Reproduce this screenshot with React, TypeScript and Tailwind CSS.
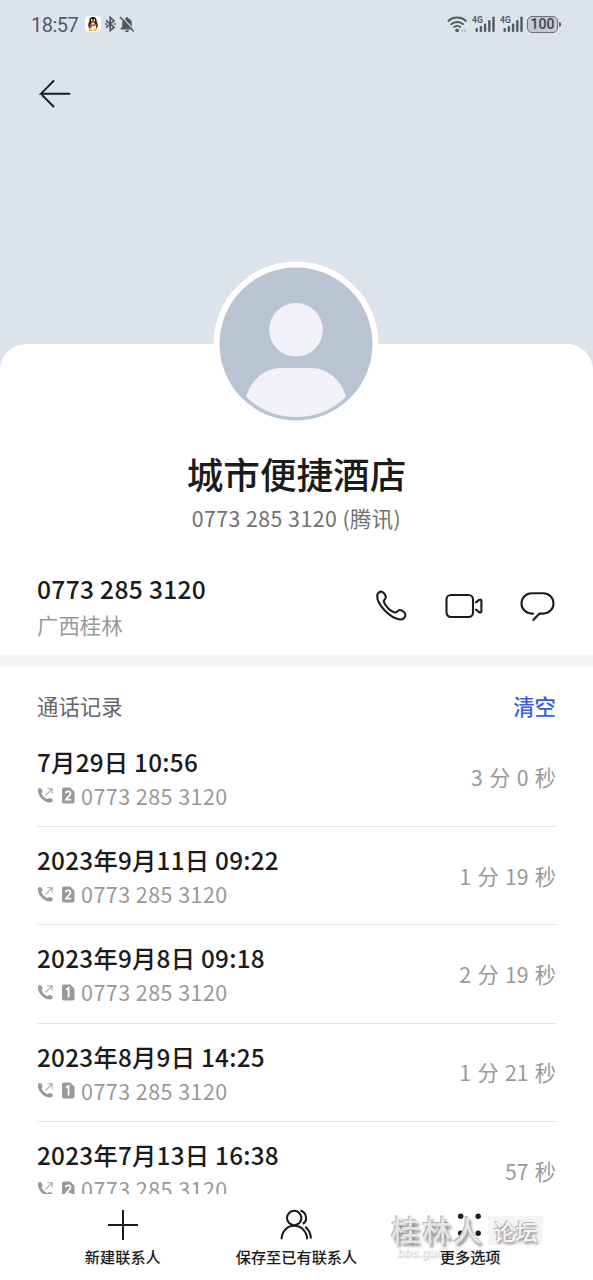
import React from "react";

const calls = [
    { date: "7月29日 10:56", sim: 2, duration: "3 分 0 秒" },
    { date: "2023年9月11日 09:22", sim: 2, duration: "1 分 19 秒" },
    { date: "2023年9月8日 09:18", sim: 1, duration: "2 分 19 秒" },
    { date: "2023年8月9日 14:25", sim: 1, duration: "1 分 21 秒" },
    { date: "2023年7月13日 16:38", sim: 2, duration: "57 秒" },
];

function Signal() {
    return (
        <svg className="w-[24px] h-[18px]" viewBox="0 0 24 18" fill="#555a61">
            <text x="0" y="8" fontSize="8.5" fontWeight="700" fontFamily="Roboto, sans-serif">4G</text>
            <rect x="3.5" y="13" width="2.4" height="4" rx="1" />
            <rect x="7.7" y="11" width="2.4" height="6" rx="1" />
            <rect x="11.9" y="8.5" width="2.4" height="8.5" rx="1" />
            <rect x="16.1" y="5" width="2.4" height="12" rx="1" />
            <rect x="20.3" y="1.5" width="2.4" height="15.5" rx="1" />
        </svg>
    );
}

function StatusBar() {
    return (
        <div className="h-[48px] pl-[31px] pr-[32px] flex items-center justify-between text-[#555a61]">
            <div className="flex items-center">
                <span className="w-[54px] pt-px text-[20px] leading-none tracking-[-0.5px] font-[Roboto,sans-serif]">18:57</span>
                <svg className="w-[16px] h-[16px]" viewBox="0 0 16 16">
                    <rect width="16" height="16" rx="4" fill="#fff" />
                    <ellipse cx="8" cy="9" rx="4.8" ry="5" fill="#222" />
                    <ellipse cx="8" cy="5" rx="3.6" ry="4" fill="#111" />
                    <ellipse cx="8" cy="10.5" rx="3.2" ry="3.6" fill="#fff" />
                    <ellipse cx="6.7" cy="4" rx="0.8" ry="1" fill="#fff" />
                    <ellipse cx="9.3" cy="4" rx="0.8" ry="1" fill="#fff" />
                    <ellipse cx="8" cy="6" rx="2.3" ry="0.7" fill="#f5a623" />
                    <path d="M3.8 7.2Q8 9.6 12.2 7.2V8.7Q8 10.6 6.8 9.6V11.8H5V9.2L3.8 8.5Z" fill="#d8262c" />
                    <path d="M4 14.4h3.6M8.4 14.4H12" stroke="#f5a623" strokeWidth="1.2" />
                </svg>
                <svg className="ml-[4px] w-[11px] h-[16px]" viewBox="0 0 11 16" fill="none" stroke="currentColor" strokeWidth="1.7">
                    <path d="M1 4.5L9 11.2L5.2 14.6V1.4L9 4.8L1 11.5" />
                    <path d="M0 8h2M8.8 8h2" />
                </svg>
                <svg className="ml-[3px] w-[16px] h-[17px]" viewBox="0 0 16 17">
                    <path d="M8 1a1.2 1.2 0 0 1 1.2 1.3C11.6 2.9 12.8 4.7 12.8 7v3.5l1.6 2V13.6H1.6v-1.1l1.6-2V7c0-2.3 1.2-4.1 3.6-4.7A1.2 1.2 0 0 1 8 1ZM6 14.3h4a2 2 0 0 1-4 0Z" fill="currentColor" />
                    <path d="M2.6 .7L16 14.8" stroke="#dbe3ec" strokeWidth="1.2" />
                    <path d="M1 1L14.8 15.6" stroke="currentColor" strokeWidth="1.5" />
                </svg>
            </div>
            <div className="flex items-center">
                <svg className="w-[21px] h-[17px]" viewBox="0 0 21 17" fill="none" stroke="currentColor" strokeWidth="2">
                    <path d="M.9 5.5C6 .3 14.3.3 19.4 5.5" />
                    <path d="M3.7 8.6c3.6-3.6 9.3-3.6 12.9 0" />
                    <path d="M6.6 11.5c2-1.9 5.1-1.9 7.1 0" />
                    <circle cx="10.1" cy="14.3" r="1.9" fill="currentColor" stroke="none" />
                    <path d="M14.5 14.5h1.6M17.2 14.5h1.6" stroke="#a9b0b9" />
                </svg>
                <span className="ml-[4px] flex gap-[4px]"><Signal /><Signal /></span>
                <span className="ml-[3px] w-[31px] h-[17px] rounded-[5px] border-[1.5px] border-[#6b7078] bg-[#c3c9d1] flex items-center justify-center text-[14px] leading-none font-medium text-[#3f444a] font-[Roboto,sans-serif]">100</span>
                <span className="ml-px w-[2px] h-[5px] rounded-r bg-[#555a61]" />
            </div>
        </div>
    );
}

function Avatar() {
    return (
        <svg className="-mt-[83px] mr-px w-[166px] h-[166px] shrink-0" viewBox="0 0 166 166">
            <circle cx="83" cy="83" r="82.5" fill="#fff" />
            <circle cx="83" cy="83" r="76.5" fill="#b9c4d1" />
            <circle cx="83" cy="68.7" r="26.8" fill="#f0f2f7" />
            <path d="M33 135.5C38 119 52 107 67 107H99C114 107 128 119 133 135.5C120 149 103 156 83 156S46 149 33 135.5Z" fill="#f0f2f7" />
        </svg>
    );
}

function OutgoingIcon() {
    return (
        <svg className="w-[17px] h-[17px]" viewBox="0 0 17 17">
            <path d="M1.1 2.2C1.8.9 3.6.5 4.4 1.8L5.4 3.6C6 5 4.5 5.5 4.5 6.3C5.4 8.9 8 11.3 10.3 12C11.1 12.1 11.6 10.6 13 11L15 12.1C16.3 13 15.8 14.7 14.4 15.3C8.4 17.3-.6 8.6 1.1 2.2Z" fill="#999" />
            <path d="M8.3 8.7L15 2M10.3 1.8h4.9v4.9" fill="none" stroke="#aaa" strokeWidth="1.1" />
        </svg>
    );
}

function SimIcon({ slot }: { slot: number }) {
    return (
        <svg className="ml-[8px] w-[13px] h-[17px]" viewBox="0 0 13 17">
            <path d="M2 .5H8.2L12.5 4.8V14.5A2 2 0 0 1 10.5 16.5H2A2 2 0 0 1 0 14.5V2.5A2 2 0 0 1 2 .5Z" fill="#999" />
            {slot === 1 ? (
                <path d="M4 5.8L6.6 4V13.5" fill="none" stroke="#fff" strokeWidth="1.8" />
            ) : (
                <path d="M3.8 6.3C4 3.7 8.7 3.8 8.6 6.5C8.5 8.3 5.2 10.2 4 12.6H9.2" fill="none" stroke="#fff" strokeWidth="1.7" />
            )}
        </svg>
    );
}

export default function App() {
    return (
        <div className="w-[593px] h-[1280px] overflow-hidden flex flex-col bg-[#dbe3ec] font-['Noto_Sans_CJK_SC',sans-serif] text-[#1b1b1b] whitespace-nowrap">
            <header className="h-[344px] shrink-0">
                <StatusBar />
                <svg className="mt-[30px] ml-[38px] w-[34px] h-[32px]" viewBox="0 0 34 32" fill="none" stroke="#191a1c" strokeWidth="1.9" strokeLinecap="round">
                    <path d="M15.5 3L3 15.7H31.5M4.5 17.5L15.5 28.5" />
                </svg>
            </header>

            <main className="flex-1 min-h-0 flex flex-col bg-white rounded-t-[26px]">
                <section className="h-[311px] shrink-0 flex flex-col items-center">
                    <Avatar />
                    <h1 className="mt-[23px] text-[36.6px] leading-[48px] font-medium">城市便捷酒店</h1>
                    <p className="mt-[6px] text-[21.3px] leading-[28px] tracking-[0.45px] text-[#707070]">0773 285 3120 (腾讯)</p>
                    <div className="mt-[39px] w-full pl-[37px] pr-[38px] flex items-center justify-between">
                        <div>
                            <div className="text-[24.6px] leading-[34px] tracking-[0.3px] font-medium">0773 285 3120</div>
                            <div className="mt-[4px] text-[21.4px] leading-[32px] text-[#999]">广西桂林</div>
                        </div>
                        <div className="flex items-center gap-[36px]">
                            <svg className="w-[34px] h-[34px]" viewBox="0 0 34 34" fill="none" stroke="#1c1c1c" strokeWidth="2.1" strokeLinejoin="round">
                                <path d="M2.2 6.3C2.6 3.8 4.9 2.2 6.8 2.8C9 3.5 11 6.3 10.8 8.5C10.6 10.6 8.5 10.7 8.8 12.8C9.8 16.8 16 22.8 19.8 23.5C22 23.8 22.8 21 24.8 21C27.4 21.1 30.6 24 30.4 26.3C30.3 28.7 27.9 30.8 25 30.5C15.5 29.1 1.6 15.8 2.2 6.3Z" />
                            </svg>
                            <svg className="w-[38px] h-[34px]" viewBox="0 0 38 34" fill="none" stroke="#1c1c1c" strokeWidth="2.1" strokeLinecap="round">
                                <rect x="1.5" y="6" width="26.5" height="22" rx="4.5" />
                                <path d="M31 13.3L34 11Q36.4 9.7 36.4 12V22Q36.4 24.3 34 23L31 20.7" />
                            </svg>
                            <svg className="w-[36px] h-[34px]" viewBox="0 0 36 34" fill="none" stroke="#1c1c1c" strokeWidth="2.1" strokeLinecap="round">
                                <path d="M14 24.6H12.7A10.2 10.2 0 0 1 12.7 4.2H24.3A10.2 10.2 0 0 1 24.3 24.6H20.5L14.3 31" />
                            </svg>
                        </div>
                    </div>
                </section>

                <div className="h-[12px] shrink-0 bg-[#f5f5f5]" />

                <section className="flex-1 min-h-0 overflow-hidden px-[37px]">
                    <div className="h-[61.5px] pt-[23px] flex justify-between text-[21.4px] leading-[32px]">
                        <span className="text-[#666]">通话记录</span>
                        <span className="font-medium text-[#3460e0]">清空</span>
                    </div>
                    {calls.map((call) => (
                        <div key={call.date} className="h-[98.4px] border-b border-[#e5e5e5] flex items-center justify-between">
                            <div>
                                <div className="text-[24.3px] leading-[34px] tracking-[0.25px] font-medium">{call.date}</div>
                                <div className="mt-[3px] flex items-center">
                                    <OutgoingIcon />
                                    <SimIcon slot={call.sim} />
                                    <span className="ml-[6px] text-[21.5px] leading-[28px] tracking-[0.45px] text-[#999]">0773 285 3120</span>
                                </div>
                            </div>
                            <span className="text-[21.2px] leading-[30px] [word-spacing:1.6px] text-[#999]">{call.duration}</span>
                        </div>
                    ))}
                </section>

                <nav className="relative h-[86px] shrink-0 px-[36px] grid grid-cols-3 bg-white text-[15.2px] leading-[22px] font-medium">
                    <div className="pt-[14px] flex flex-col items-center">
                        <svg className="w-[34px] h-[34px]" viewBox="0 0 34 34" fill="none" stroke="#1c1c1c" strokeWidth="2">
                            <path d="M17 2V32M2 17H32" />
                        </svg>
                        <span className="mt-[3px]">新建联系人</span>
                    </div>
                    <div className="pt-[14px] flex flex-col items-center">
                        <svg className="w-[34px] h-[34px]" viewBox="0 0 34 34" fill="none" stroke="#1c1c1c" strokeWidth="2.1">
                            <circle cx="15.2" cy="10" r="7.2" />
                            <path d="M2.6 31.3C2.7 23.5 8 17.8 15.2 17.8S28 23.5 28.1 31.3" />
                            <path d="M21.5 2.6C28.5 5 28.5 13.5 23.7 15.8M26.3 18.8C30.2 21.7 31.7 25.8 31.9 30.5" />
                        </svg>
                        <span className="mt-[3px]">保存至已有联系人</span>
                    </div>
                    <div className="pt-[14px] flex flex-col items-center">
                        <svg className="w-[34px] h-[34px]" viewBox="0 0 34 34" fill="#1c1c1c">
                            <circle cx="7.7" cy="8.3" r="2.7" />
                            <circle cx="25.2" cy="8.3" r="2.7" />
                            <circle cx="7.7" cy="25.3" r="2.7" />
                            <circle cx="25.2" cy="25.3" r="2.7" />
                        </svg>
                        <span className="relative z-10 mt-[3px]">更多选项</span>
                    </div>

                    {/* forum watermark */}
                    <div className="absolute left-[391px] top-[17px] text-[#e6e6e6]">
                        <div className="flex items-center">
                            <span className="w-[97px] text-[29px] leading-[36px] tracking-[2px] [text-shadow:2px_3px_3px_#888,-1px_-1px_0_#b5b5b5]">桂林人</span>
                            <span className="mt-[2px] w-[55px] h-[29px] bg-[#f4f4f4] text-center text-[22px] leading-[28px] text-[#f4f4f4] [text-shadow:1px_2px_3px_#888,-1px_-1px_0_#b5b5b5]">论坛</span>
                        </div>
                        <div className="pl-[6px] -mt-[3px] text-[12px] leading-[16px] italic font-bold text-white/60 font-['Liberation_Sans',sans-serif] [text-shadow:1px_2px_2px_#ccc]">bbs.guilin.com.cn</div>
                    </div>
                </nav>
            </main>
        </div>
    );
}
